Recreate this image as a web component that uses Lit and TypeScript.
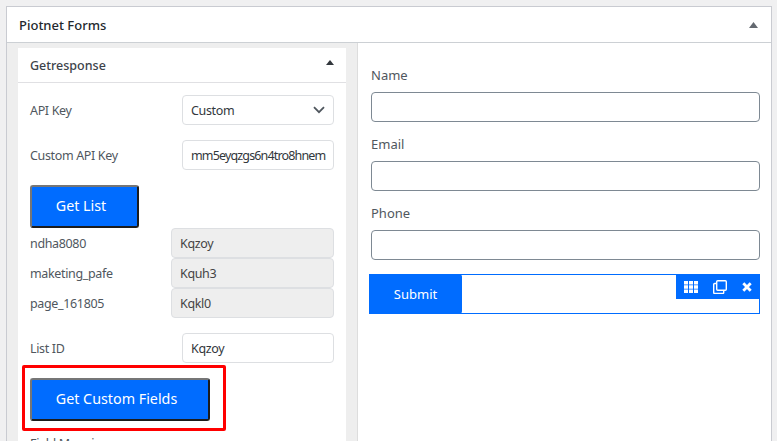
import { LitElement, html, css } from "lit";
import { customElement } from "lit/decorators.js";

@customElement("app-root")
export class AppRoot extends LitElement {
  static styles = css`
    :host { display: block; width: 777px; height: 441px; overflow: hidden; background: #f0f0f1; font-family: "Noto Sans", "Open Sans", sans-serif; font-size: 13px; color: #50575e; box-sizing: border-box; padding: 6px 5px 0 6px; }
    * { box-sizing: border-box; }
    .panel { border: 1px solid #c9cbd1; background: #fff; height: 460px; }
    .head { height: 36px; border-bottom: 1px solid #ccd0d4; display: flex; align-items: center; justify-content: space-between; padding: 0 13px 0 12px; font-size: 13px; font-weight: 500; color: #23282d; }
    .body { display: flex; height: 420px; }
    .left { position: relative; width: 351px; background: #eee; border-right: 1px solid #ddd; padding: 5px 11px 0 11px; }
    .card { background: #fff; height: 420px; }
    .card-head { height: 35px; border-bottom: 1px solid #e0e0e3; display: flex; align-items: center; justify-content: space-between; padding: 0 12px; font-size: 12.5px; font-weight: 500; color: #3c434a; }
    .card-head svg { margin-bottom: 6px; }
    .card-body { padding: 12px 12px 0; }
    .row { display: flex; justify-content: space-between; align-items: center; height: 30px; margin-bottom: 15px; }
    .field { width: 152px; height: 30px; border: 1px solid #dddfe2; border-radius: 4px; padding: 0 8px; display: flex; align-items: center; justify-content: space-between; color: #32373c; background: #fff; overflow: hidden; white-space: nowrap; font-size: 12.5px; letter-spacing: -0.35px; }
    .long { letter-spacing: -0.85px; }
    .key { font-size: 12.5px; letter-spacing: -0.35px; }
    .btn { height: 43px; background: #006cff; color: #fff; font-size: 14.3px; border: 2px solid; border-color: #767676 #1c1c1c #1c1c1c #767676; border-radius: 3px; display: flex; align-items: center; justify-content: center; padding: 0 7px 2px 0; }
    .b1 { width: 109px; }
    .b2 { width: 180px; }
    .list-row { display: flex; justify-content: space-between; align-items: center; height: 30px; }
    .ro { width: 163px; height: 30px; background: #eee; border: 1px solid #dddfe2; border-radius: 4px; padding: 0 8px; display: flex; align-items: center; color: #444; font-size: 12.5px; letter-spacing: -0.35px; }
    .spacer { height: 15px; }
    .cut { margin-top: 14px; }
    .red { position: absolute; left: 15px; top: 322px; width: 204px; height: 66px; border: 3px solid #ff0000; border-radius: 2px; }
    .right { flex: 1; padding: 22px 11px 0 13px; position: relative; }
    .label { font-size: 13px; height: 27px; padding-bottom: 8px; display: flex; align-items: center; color: #50575e; }
    .inp { height: 30px; width: 389px; border: 1px solid #7e8993; border-radius: 4px; margin-bottom: 12px; }
    .widget { position: relative; margin-left: -2px; margin-top: 14px; width: 391px; height: 40px; border: 1px solid #006cff; }
    .submit { width: 93px; height: 40px; margin: -1px 0 0 -1px; background: #006cff; color: #fff; font-size: 13px; border-radius: 3px; display: flex; align-items: center; justify-content: center; }
    .tools { position: absolute; top: -1px; right: -1px; width: 84px; height: 25px; background: #006cff; display: flex; align-items: center; justify-content: space-between; padding: 0 8px; }
    svg { display: block; }
  `;

  render() {
    return html`
      <div class="panel">
        <div class="head"><span>Piotnet Forms</span>
          <svg width="9" height="6" viewBox="0 0 9 6"><path d="M4.5 0L9 6H0z" fill="#646970"/></svg>
        </div>
        <div class="body">
          <div class="left">
            <div class="card">
              <div class="card-head"><span>Getresponse</span>
                <svg width="8" height="5" viewBox="0 0 8 5"><path d="M4 0L8 5H0z" fill="#32373c"/></svg>
              </div>
              <div class="card-body">
                <div class="row"><span class="key">API Key</span>
                  <div class="field">Custom
                    <svg width="12" height="8" viewBox="0 0 12 8"><path d="M1 1.2L6 6.2L11 1.2" fill="none" stroke="#50575e" stroke-width="1.8"/></svg>
                  </div>
                </div>
                <div class="row"><span class="key">Custom API Key</span><div class="field long">mm5eyqzgs6n4tro8hnem</div></div>
                <div class="btn b1">Get List</div>
                <div class="list-row"><span class="key">ndha8080</span><div class="ro">Kqzoy</div></div>
                <div class="list-row"><span class="key">maketing_pafe</span><div class="ro">Kquh3</div></div>
                <div class="list-row"><span class="key">page_161805</span><div class="ro">Kqkl0</div></div>
                <div class="spacer"></div>
                <div class="row"><span class="key">List ID</span><div class="field">Kqzoy</div></div>
                <div class="btn b2">Get Custom Fields</div>
                <div class="cut key">Field Mapping</div>
              </div>
            </div>
            <div class="red"></div>
          </div>
          <div class="right">
            <div class="label">Name</div><div class="inp"></div>
            <div class="label">Email</div><div class="inp"></div>
            <div class="label">Phone</div><div class="inp"></div>
            <div class="widget">
              <div class="submit">Submit</div>
              <div class="tools">
                <svg width="14" height="12" viewBox="0 0 14 12" fill="#fff">
                  <path d="M0 0h4v3.5H0zM5 0h4v3.5H5zM10 0h4v3.5h-4zM0 4.3h4v3.4H0zM5 4.3h4v3.4H5zM10 4.3h4v3.4h-4zM0 8.5h4V12H0zM5 8.5h4V12H5zM10 8.5h4V12h-4z"/>
                </svg>
                <svg width="14" height="14" viewBox="0 0 14 14" fill="none" stroke="#fff" stroke-width="1.4">
                  <rect x="3.7" y="0.7" width="9.6" height="9.6" rx="1"/>
                  <path d="M3.7 3.5H1.7a1 1 0 0 0-1 1v8a1 1 0 0 0 1 1h8a1 1 0 0 0 1-1v-2" />
                </svg>
                <svg width="10" height="10" viewBox="0 0 10 10"><path d="M1.3 1.3L8.7 8.7M8.7 1.3L1.3 8.7" stroke="#fff" stroke-width="2.8"/></svg>
              </div>
            </div>
          </div>
        </div>
      </div>
    `;
  }
}
